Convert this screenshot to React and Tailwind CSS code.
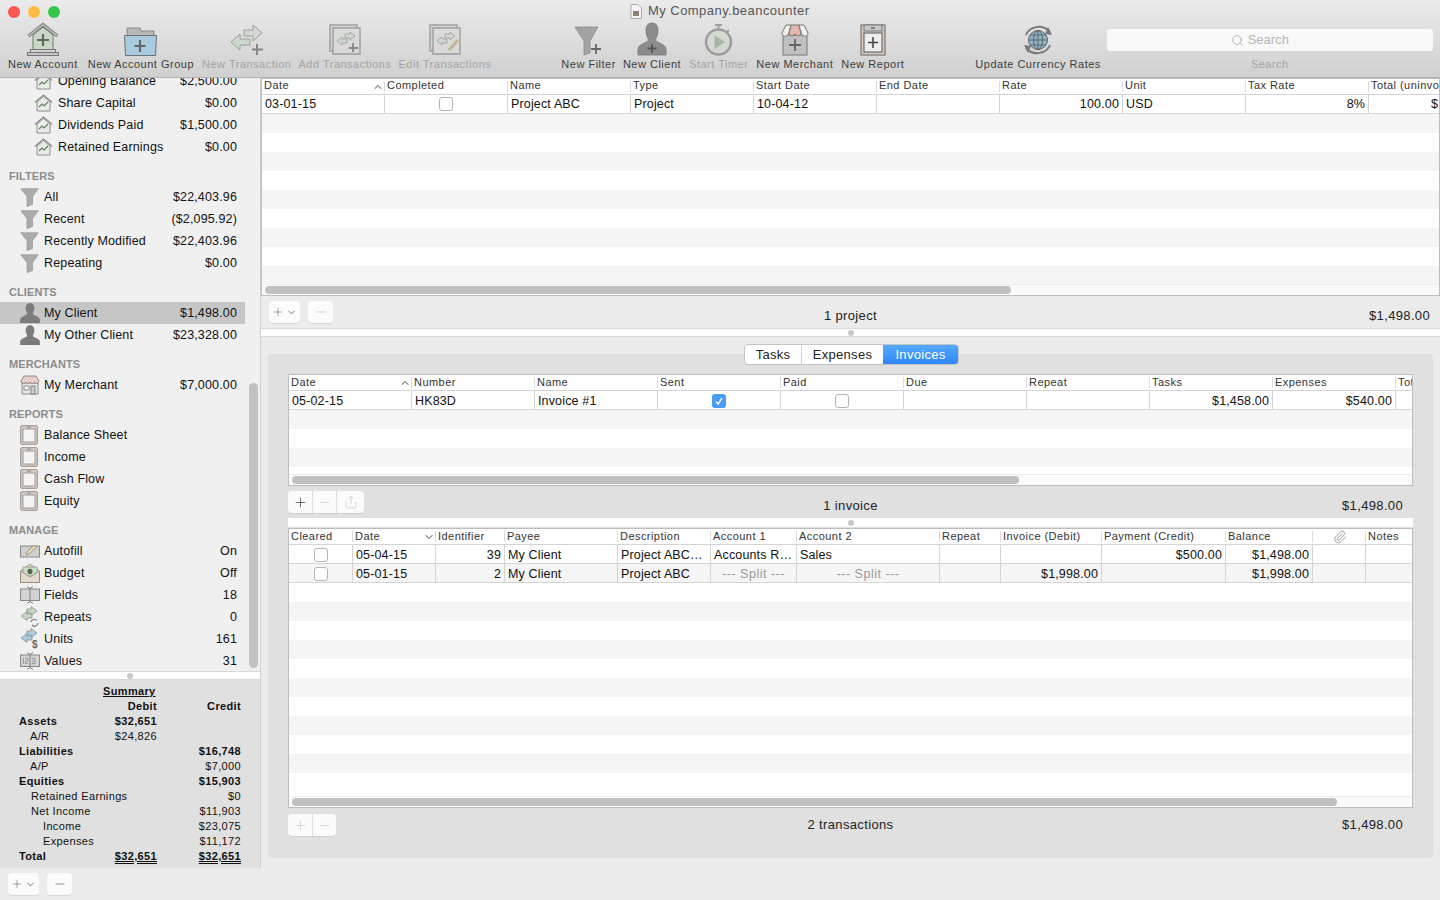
import { ChevronDown, ChevronUp, Minus, Paperclip, Plus, Search, Share } from "lucide-react";

const FONT = "font-['Liberation_Sans',Arial,sans-serif]";

// toolbar icons
function HouseIcon() {
  return (
    <svg width="32" height="33" viewBox="0 0 32 33">
      <path d="M6 12 L16 4 L26 12 V27 H6 Z" fill="#c7d8c4" stroke="#777" strokeWidth="1" />
      <path d="M1.500 13 L16 1.800 L30.500 13" fill="none" stroke="#777" strokeWidth="3.400" />
      <path d="M1.500 13 L16 1.800 L30.500 13" fill="none" stroke="#b9b9b9" strokeWidth="1.600" />
      <rect x="3.500" y="26.500" width="25" height="3" fill="#cfcfcf" stroke="#777" />
      <rect x="0.500" y="29.500" width="31" height="3" fill="#c4c4c4" stroke="#777" />
      <path d="M16 11 V23 M10 17 H22" stroke="#666" strokeWidth="2.200" />
    </svg>
  );
}

function FolderIcon() {
  return (
    <svg width="33" height="29" viewBox="0 0 33 29">
      <path d="M3 12 V1 H16 L17 4 H30 V12 Z" fill="#b8b8b8" stroke="#888" strokeWidth="1" />
      <path d="M0.500 8.500 H32.500 L31.500 28.500 H1.500 Z" fill="#a8cbe0" stroke="#6f6f6f" strokeWidth="1" />
      <path d="M16 13 V25 M10.500 19 H21.500" stroke="#666" strokeWidth="2.200" />
    </svg>
  );
}

function ArrowsIcon() {
  return (
    <svg width="34" height="32" viewBox="0 0 34 32" opacity="0.62">
      <path d="M14 6 H23 V1 L32 9 L23 17 V12 H14 Z" fill="#c6d8c4" stroke="#777" strokeWidth="1" />
      <path d="M20 15 H10 V10 L1 18 L10 26 V21 H20 Z" fill="#c6d8c4" stroke="#777" strokeWidth="1" />
      <path d="M27 20 V31 M22 25.500 H33" stroke="#555" strokeWidth="2" />
    </svg>
  );
}

function DocsIcon({ pencil }) {
  return (
    <svg width="32" height="32" viewBox="0 0 32 32" opacity="0.62">
      <path d="M1 1 H28 V27 H1 Z" fill="#cfcfcf" stroke="#777" strokeWidth="1.400" />
      <path d="M4 4 H31 V30 H4 Z" fill="#d8d8d8" stroke="#777" strokeWidth="1.400" />
      <path d="M16 10 H21 V8 L26 12 L21 16 V14 H16 Z" fill="#c6d8c4" stroke="#777" strokeWidth="0.800" />
      <path d="M18 15 H13 V13 L8 17 L13 21 V19 H18 Z" fill="#c6d8c4" stroke="#777" strokeWidth="0.800" />
      {pencil ? (
        <path d="M20 26 L29 16" stroke="#b59b62" strokeWidth="3" />
      ) : (
        <path d="M24 19 V28 M20 24 H29" stroke="#555" strokeWidth="1.800" />
      )}
    </svg>
  );
}

function FunnelIcon() {
  return (
    <svg width="30" height="30" viewBox="0 0 30 30">
      <path d="M1 1 H24 L16 15 V27 L10 29 V15 Z" fill="#a3a3a3" stroke="#8c8c8c" strokeWidth="0.800" />
      <path d="M22 18 V28 M17 23 H27" stroke="#666" strokeWidth="1.800" />
    </svg>
  );
}

function PersonIcon() {
  return (
    <svg width="30" height="34" viewBox="0 0 30 34">
      <path d="M15 1 C20 1 21 5 21 9 C21 13 19 16 18.500 18 C19 21 29 22 29 27 V33 H1 V27 C1 22 11 21 11.500 18 C11 16 9 13 9 9 C9 5 10 1 15 1 Z" fill="#8c8c8c" stroke="#777" strokeWidth="0.800" />
      <path d="M15 22 V31 M10.500 26.500 H19.500" stroke="#555" strokeWidth="1.800" />
    </svg>
  );
}

function TimerIcon() {
  return (
    <svg width="30" height="32" viewBox="0 0 30 32" opacity="0.62">
      <path d="M11 1 H18 M14.500 1 V6 M25 6 L22 9" stroke="#777" strokeWidth="2" />
      <circle cx="14.500" cy="18" r="12.500" fill="#cfd9cb" stroke="#777" strokeWidth="2.500" />
      <path d="M10.500 11 L21 18 L10.500 25 Z" fill="#8b9b88" />
    </svg>
  );
}

function ShopIcon() {
  return (
    <svg width="28" height="32" viewBox="0 0 28 32">
      <rect x="2" y="11" width="24" height="20" fill="#c0c0c0" stroke="#777" />
      <path d="M10 1 L8 10 C9 12 12 12 14 10 C16 12 19 12 20 10 L18 1 Z" fill="#e3b9ae" stroke="#777" />
      <path d="M5 1 L1 9 C1 13 6 13 7.500 10 L10 1 Z M23 1 L27 9 C27 13 22 13 20.500 10 L18 1 Z" fill="#f0f0f0" stroke="#777" />
      <path d="M14 15 V27 M8 21 H20" stroke="#666" strokeWidth="1.800" />
    </svg>
  );
}

function ClipboardIcon() {
  return (
    <svg width="26" height="32" viewBox="0 0 26 32">
      <rect x="1" y="1" width="24" height="30" fill="#d9c9bd" stroke="#777" strokeWidth="1.200" />
      <rect x="4" y="1" width="18" height="6" fill="#c8c8c8" stroke="#777" />
      <rect x="4" y="9" width="18" height="19" fill="#ededed" stroke="#555" />
      <path d="M13 13 V24 M8 18.500 H18" stroke="#444" strokeWidth="1.600" />
      <path d="M11 4 H15" stroke="#555" strokeWidth="1.200" />
    </svg>
  );
}

function GlobeIcon() {
  return (
    <svg width="32" height="32" viewBox="0 0 32 32">
      <path d="M4 11 C7 3 20 -1 28 8" fill="none" stroke="#777" strokeWidth="2" />
      <path d="M28 21 C25 29 12 33 4 24" fill="none" stroke="#777" strokeWidth="2" />
      <path d="M26 3 L30 11 L23 10 Z M6 29 L2 21 L9 22 Z" fill="#777" />
      <circle cx="16" cy="16" r="9.500" fill="#8fb3c8" stroke="#666" />
      <path d="M6.500 16 H25.500 M8 11 H24 M8 21 H24 M16 6.500 V25.500" stroke="#555" strokeWidth="0.800" fill="none" />
      <ellipse cx="16" cy="16" rx="4.500" ry="9.500" fill="none" stroke="#555" strokeWidth="0.800" />
    </svg>
  );
}

// small sidebar icons
function SmallHouse() {
  return (
    <svg width="19" height="18" viewBox="0 0 19 18">
      <path d="M3 8 L9.500 2.500 L16 8 V17 H3 Z" fill="#e8ece6" stroke="#777" strokeWidth="0.800" />
      <path d="M0.800 8.500 L9.500 1 L18.200 8.500" fill="none" stroke="#8a8a8a" strokeWidth="1.200" />
      <path d="M5 13 L8 10 L10 12 L14 8" fill="none" stroke="#5f7f5d" strokeWidth="1.100" />
    </svg>
  );
}

function SmallFunnel() {
  return (
    <svg width="19" height="19" viewBox="0 0 19 19">
      <path d="M0.800 0.800 H18.200 L12.500 8.500 V16.500 L7 18.500 V8.500 Z" fill="#ababab" stroke="#9a9a9a" strokeWidth="0.800" />
    </svg>
  );
}

function SmallPerson() {
  return (
    <svg width="20" height="20" viewBox="0 0 20 20">
      <path d="M10 0.500 C13 0.500 14 3 14 5.500 C14 8 12.500 9.500 12.500 11 C13 13 19.500 13.500 19.500 16.500 V20 H0.500 V16.500 C0.500 13.500 7 13 7.500 11 C7.500 9.500 6 8 6 5.500 C6 3 7 0.500 10 0.500 Z" fill="#7c7c7c" stroke="#6f6f6f" strokeWidth="0.600" />
    </svg>
  );
}

function SmallShop() {
  return (
    <svg width="20" height="20" viewBox="0 0 20 20">
      <rect x="2" y="8" width="16" height="11" fill="#e6e6e6" stroke="#777" strokeWidth="0.800" />
      <path d="M4 1 H16 L19 6 C19 9 15 9 14.500 7 C14 9 11 9 10 7 C9 9 6 9 5.500 7 C5 9 1 9 1 6 Z" fill="#e8d0ca" stroke="#777" strokeWidth="0.800" />
      <rect x="4" y="11" width="5" height="4" fill="#fff" stroke="#777" strokeWidth="0.800" />
      <rect x="11" y="11" width="4" height="8" fill="#ccc" stroke="#777" strokeWidth="0.800" />
    </svg>
  );
}

function SmallClip() {
  return (
    <svg width="18" height="20" viewBox="0 0 18 20">
      <rect x="0.700" y="0.700" width="16.600" height="18.600" rx="1" fill="#d9d0c9" stroke="#8f867d" strokeWidth="0.900" />
      <rect x="3" y="4" width="12" height="13" fill="#f3f3f3" stroke="#888" strokeWidth="0.800" />
      <path d="M7 2.200 H11" stroke="#777" strokeWidth="0.800" />
    </svg>
  );
}

function SmallPencilBox() {
  return (
    <svg width="20" height="14" viewBox="0 0 20 14">
      <rect x="0.500" y="2" width="19" height="11" fill="#cfcfcf" stroke="#888" />
      <path d="M6 11 L7 8 L14 1 L16.500 3 L9 10 Z" fill="#e9dcb4" stroke="#8a7d55" strokeWidth="0.700" />
    </svg>
  );
}

function SmallEnvelope() {
  return (
    <svg width="20" height="20" viewBox="0 0 20 20">
      <path d="M0.500 8 L10 1 L19.500 8 V19.500 H0.500 Z" fill="#e4d8cc" stroke="#8a8178" strokeWidth="0.800" />
      <rect x="3" y="4" width="14" height="9" fill="#c8dcc6" stroke="#7d8f7b" strokeWidth="0.600" />
      <ellipse cx="10" cy="8.500" rx="2.500" ry="2.800" fill="#4b6b49" />
      <path d="M0.500 8 L10 14 L19.500 8 V19.500 H0.500 Z" fill="#e4d8cc" stroke="#8a8178" strokeWidth="0.800" />
    </svg>
  );
}

function SmallFields({ digits }) {
  return (
    <svg width="20" height="18" viewBox="0 0 20 18">
      <rect x="0.500" y="3" width="19" height="11.500" fill="#d3d3d3" stroke="#888" />
      <path d="M10 2 V16 M7 0.500 L10 2.500 L13 0.500 M7 17.500 L10 15.500 L13 17.500" fill="none" stroke="#777" strokeWidth="0.900" />
      {digits && <path d="M3.500 6 V12 M5.500 6.500 H8 V9 H5.500 V11.500 H8 M12 6.500 H15 V11.500 H12 M12 9 H15" fill="none" stroke="#888" strokeWidth="0.800" />}
    </svg>
  );
}

function SmallArrows({ tone, dollar }) {
  return (
    <svg width="20" height="22" viewBox="0 0 20 22">
      <path d="M7 3 H11 V0.500 L17 5 L11 9.500 V7 H7 Z" fill={tone} stroke="#888" strokeWidth="0.700" />
      <path d="M12 8 H7 V5.500 L1 10 L7 14.500 V12 H12 Z" fill={tone} stroke="#888" strokeWidth="0.700" />
      {dollar ? (
        <text x="12" y="20" fontSize="10" fontWeight="700" fill="#666">$</text>
      ) : (
        <path d="M11 16 A3.500 3.500 0 0 1 17 14.500 M18 17 A3.500 3.500 0 0 1 12 19" fill="none" stroke="#777" strokeWidth="1.100" />
      )}
    </svg>
  );
}

function ToolItem({ label, icon, dim, className = "" }) {
  return (
    <div className={`flex flex-col items-center ${className}`}>
      <div className="flex h-[38px] items-end justify-center">{icon}</div>
      <span className={`mt-[1px] whitespace-nowrap text-[11px] leading-[14px] tracking-[0.5px] ${dim ? "text-[#a3a3a3]" : "text-[#3c3c3c]"}`}>{label}</span>
    </div>
  );
}

function Toolbar() {
  return (
    <div className="relative h-[78px] shrink-0 rounded-t-[5px] border-b border-[#b1b1b1] bg-gradient-to-b from-[#ebebeb] to-[#d0d0d0]">
      <div className="flex h-[23px] items-center pl-[8px]">
        <span className="h-[12px] w-[12px] rounded-full bg-[#fc5753]" />
        <span className="ml-[8px] h-[12px] w-[12px] rounded-full bg-[#fdbc40]" />
        <span className="ml-[8px] h-[12px] w-[12px] rounded-full bg-[#33c748]" />
      </div>
      <div className="absolute left-[630px] top-[3px] flex items-center gap-[6px] text-[13px] leading-[16px] tracking-[0.45px] text-[#555]">
        <svg width="12" height="15" viewBox="0 0 12 15">
          <path d="M1 0.500 H8 L11.500 4 V14.500 H1 Z" fill="#f5f5f5" stroke="#aaa" />
          <rect x="3" y="7" width="6" height="5" fill="#8a7f74" />
        </svg>
        <span>My Company.beancounter</span>
      </div>
      <div className="absolute left-0 right-0 top-[18px] flex">
        <ToolItem label="New Account" icon={<HouseIcon />} className="ml-[8px]" />
        <ToolItem label="New Account Group" icon={<FolderIcon />} className="ml-[10px]" />
        <ToolItem label="New Transaction" icon={<ArrowsIcon />} dim className="ml-[8px]" />
        <ToolItem label="Add Transactions" icon={<DocsIcon />} dim className="ml-[7px]" />
        <ToolItem label="Edit Transactions" icon={<DocsIcon pencil />} dim className="ml-[7px]" />
        <ToolItem label="New Filter" icon={<FunnelIcon />} className="ml-[70px]" />
        <ToolItem label="New Client" icon={<PersonIcon />} className="ml-[7px]" />
        <ToolItem label="Start Timer" icon={<TimerIcon />} dim className="ml-[8px]" />
        <ToolItem label="New Merchant" icon={<ShopIcon />} className="ml-[8px]" />
        <ToolItem label="New Report" icon={<ClipboardIcon />} className="ml-[8px]" />
        <ToolItem label="Update Currency Rates" icon={<GlobeIcon />} className="ml-[71px]" />
        <div className="ml-[6px] flex w-[326px] flex-col items-center">
          <div className="mt-[11px] flex h-[22px] w-full items-center justify-center gap-[4px] rounded-[3px] bg-[#f9f9f9] pr-[20px] text-[13px] text-[#b5b5b5]">
            <Search size={13} strokeWidth={1.300} className="text-[#999]" />
            <span>Search</span>
          </div>
          <span className="mt-[6px] text-[11px] leading-[14px] tracking-[0.5px] text-[#a3a3a3]">Search</span>
        </div>
      </div>
    </div>
  );
}

function SideHead({ children }) {
  return (
    <div className="flex h-[28px] items-end pb-[3px] pl-[9px] text-[11px] font-bold leading-[14px] tracking-[0.1px] text-[#8c8c8c]">
      {children}
    </div>
  );
}

function SideRow({ icon, label, value, selected, left = "pl-[20px]" }) {
  return (
    <div className={`flex h-[22px] items-center ${left} pr-[8px] text-[12.500px] tracking-[0.15px] text-[#111] ${selected ? "bg-[#c6c6c6]" : ""}`}>
      <span className="flex w-[24px] shrink-0 items-center">{icon}</span>
      <span className="flex-1 truncate">{label}</span>
      <span>{value}</span>
    </div>
  );
}

function Sidebar() {
  return (
    <div className="flex w-full flex-col border-r border-[#cfcfcf] bg-[#f0f0f0]">
      <div className="relative h-[593px] shrink-0 overflow-hidden">
        <div className="-mt-[8px] w-[245px]">
          <SideRow icon={<SmallHouse />} label="Opening Balance" value="$2,500.00" left="pl-[34px]" />
          <SideRow icon={<SmallHouse />} label="Share Capital" value="$0.00" left="pl-[34px]" />
          <SideRow icon={<SmallHouse />} label="Dividends Paid" value="$1,500.00" left="pl-[34px]" />
          <SideRow icon={<SmallHouse />} label="Retained Earnings" value="$0.00" left="pl-[34px]" />
          <SideHead>FILTERS</SideHead>
          <SideRow icon={<SmallFunnel />} label="All" value="$22,403.96" />
          <SideRow icon={<SmallFunnel />} label="Recent" value="($2,095.92)" />
          <SideRow icon={<SmallFunnel />} label="Recently Modified" value="$22,403.96" />
          <SideRow icon={<SmallFunnel />} label="Repeating" value="$0.00" />
          <SideHead>CLIENTS</SideHead>
          <SideRow icon={<SmallPerson />} label="My Client" value="$1,498.00" selected />
          <SideRow icon={<SmallPerson />} label="My Other Client" value="$23,328.00" />
          <SideHead>MERCHANTS</SideHead>
          <SideRow icon={<SmallShop />} label="My Merchant" value="$7,000.00" />
          <SideHead>REPORTS</SideHead>
          <SideRow icon={<SmallClip />} label="Balance Sheet" />
          <SideRow icon={<SmallClip />} label="Income" />
          <SideRow icon={<SmallClip />} label="Cash Flow" />
          <SideRow icon={<SmallClip />} label="Equity" />
          <SideHead>MANAGE</SideHead>
          <SideRow icon={<SmallPencilBox />} label="Autofill" value="On" />
          <SideRow icon={<SmallEnvelope />} label="Budget" value="Off" />
          <SideRow icon={<SmallFields />} label="Fields" value="18" />
          <SideRow icon={<SmallArrows tone="#c6d8c4" />} label="Repeats" value="0" />
          <SideRow icon={<SmallArrows tone="#a8cbdf" dollar />} label="Units" value="161" />
          <SideRow icon={<SmallFields digits />} label="Values" value="31" />
        </div>
        <div className="absolute left-[249px] top-[305px] h-[285px] w-[9px] rounded-full bg-[#c1c1c1]" />
      </div>
      <div className="flex h-[9px] shrink-0 items-center justify-center border-y border-[#d8d8d8] bg-white">
        <span className="h-[6px] w-[6px] rounded-full bg-[#c8c8c8]" />
      </div>
      <Summary />
    </div>
  );
}

const summaryRows = [
  { label: "Assets", debit: "$32,651", bold: true, pad: "pl-[19px]" },
  { label: "A/R", debit: "$24,826", pad: "pl-[30px]" },
  { label: "Liabilities", credit: "$16,748", bold: true, pad: "pl-[19px]" },
  { label: "A/P", credit: "$7,000", pad: "pl-[30px]" },
  { label: "Equities", credit: "$15,903", bold: true, pad: "pl-[19px]" },
  { label: "Retained Earnings", credit: "$0", pad: "pl-[31px]" },
  { label: "Net Income", credit: "$11,903", pad: "pl-[31px]" },
  { label: "Income", credit: "$23,075", pad: "pl-[43px]" },
  { label: "Expenses", credit: "$11,172", pad: "pl-[43px]" },
];

function Summary() {
  return (
    <div className="h-[188px] shrink-0 bg-[#e0e0e0] pt-[4px] text-[11px] leading-[15px] tracking-[0.35px] text-[#111]">
      <div className="pl-[103px] font-bold underline">Summary</div>
      <div className="grid grid-cols-[157px_84px] font-bold">
        <span className="text-right">Debit</span>
        <span className="text-right">Credit</span>
      </div>
      {summaryRows.map((r) => (
        <div key={r.label} className={`relative grid h-[15px] grid-cols-[157px_84px] ${r.bold ? "font-bold" : ""}`}>
          <span className="text-right">{r.debit}</span>
          <span className="text-right">{r.credit}</span>
          <span className={`absolute left-0 top-0 whitespace-nowrap ${r.pad}`}>{r.label}</span>
        </div>
      ))}
      <div className="relative grid grid-cols-[157px_84px] font-bold">
        <span className="text-right underline decoration-double">$32,651</span>
        <span className="text-right underline decoration-double">$32,651</span>
        <span className="absolute left-0 top-0 pl-[19px]">Total</span>
      </div>
    </div>
  );
}

function Check({ on }) {
  if (on) {
    return (
      <span className="flex h-[14px] w-[14px] items-center justify-center rounded-[3px] bg-[#4a9cf6]">
        <svg width="10" height="10" viewBox="0 0 10 10">
          <path d="M2 5.500 L4.200 8 L8 2" fill="none" stroke="#fff" strokeWidth="1.400" />
        </svg>
      </span>
    );
  }
  return <span className="h-[14px] w-[14px] rounded-[3px] border border-[#b4b4b4] bg-white" />;
}

// cols: [{ title, width, sort }], rows: arrays of cells
function DataTable({ cols, rows, stripes, height, thumb, stripeFirst, top }) {
  return (
    <div className="relative overflow-hidden border border-[#bdbdbd] bg-white" style={{ height }}>
      <div className={`flex h-[16px] border-b border-[#d4d4d4] bg-white ${top ? "pb-[2px]" : ""}`}>
        {cols.map((c) => (
          <div
            key={c.title}
            className="relative flex shrink-0 items-center whitespace-nowrap pl-[2px] text-[11px] tracking-[0.45px] text-[#333]"
            style={{ width: c.width }}
          >
            {c.title === "clip" ? (
              <Paperclip size={14} strokeWidth={1.200} className="ml-[18px] text-[#777]" />
            ) : (
              <span className="overflow-hidden">{c.title}</span>
            )}
            {c.sort === "up" && <ChevronUp size={12} strokeWidth={2} className="absolute right-[1px] top-[2px] text-[#444]" />}
            {c.sort === "down" && <ChevronDown size={12} strokeWidth={2} className="absolute right-[1px] top-[2px] text-[#444]" />}
            <span className="absolute right-0 top-[2px] h-[11px] w-px bg-[#dcdcdc]" />
          </div>
        ))}
      </div>
      {rows.map((row, i) => (
        <div key={i} className={`flex h-[19px] border-b border-[#d4d4d4] ${i % 2 ? "bg-[#f5f5f5]" : "bg-white"}`}>
          {cols.map((c, j) => {
            const cell = row[j];
            return (
              <div
                key={j}
                className={`flex shrink-0 items-center overflow-hidden whitespace-nowrap border-r border-[#d4d4d4] px-[3px] text-[12.500px] tracking-[0.15px] text-[#111] ${top ? "" : "pt-[2px]"} ${c.right ? "justify-end" : ""} ${c.center ? "justify-center" : ""}`}
                style={{ width: c.width }}
              >
                {cell && cell.check !== undefined ? (
                  <Check on={cell.check} />
                ) : cell && cell.dim ? (
                  <span className="w-full text-center tracking-[0.5px] text-[#999]">{cell.dim}</span>
                ) : (
                  cell
                )}
              </div>
            );
          })}
        </div>
      ))}
      {Array.from({ length: stripes }).map((_, i) => (
        <div key={i} className={`h-[19px] ${(i % 2 === 0) === !stripeFirst ? "bg-[#f5f5f5]" : "bg-white"}`} />
      ))}
      <div className="absolute bottom-0 left-0 right-0 flex h-[11px] items-center border-t border-[#ececec] bg-[#fafafa] px-[3px]">
        <div className="h-[8px] rounded-full bg-[#c1c1c1]" style={{ width: thumb }} />
      </div>
    </div>
  );
}

const projectCols = [
  { title: "Date", width: 123, sort: "up" },
  { title: "Completed", width: 123, center: true },
  { title: "Name", width: 123 },
  { title: "Type", width: 123 },
  { title: "Start Date", width: 123 },
  { title: "End Date", width: 123 },
  { title: "Rate", width: 123, right: true },
  { title: "Unit", width: 123 },
  { title: "Tax Rate", width: 123, right: true },
  { title: "Total (uninvoiced)", width: 123, right: true },
];

const invoiceCols = [
  { title: "Date", width: 123, sort: "up" },
  { title: "Number", width: 123 },
  { title: "Name", width: 123 },
  { title: "Sent", width: 123, center: true },
  { title: "Paid", width: 123, center: true },
  { title: "Due", width: 123 },
  { title: "Repeat", width: 123 },
  { title: "Tasks", width: 123, right: true },
  { title: "Expenses", width: 123, right: true },
  { title: "Total", width: 123 },
];

const txCols = [
  { title: "Cleared", width: 64, center: true },
  { title: "Date", width: 83, sort: "down" },
  { title: "Identifier", width: 69, right: true },
  { title: "Payee", width: 113 },
  { title: "Description", width: 93 },
  { title: "Account 1", width: 86 },
  { title: "Account 2", width: 143 },
  { title: "Repeat", width: 61 },
  { title: "Invoice (Debit)", width: 101, right: true },
  { title: "Payment (Credit)", width: 124, right: true },
  { title: "Balance", width: 87, right: true },
  { title: "clip", width: 53 },
  { title: "Notes", width: 47 },
];

function SegButton({ parts }) {
  return (
    <div className="flex h-[22px] overflow-hidden rounded-[4px] bg-[#fbfbfb] shadow-[0_1px_0_#d0d0d0]">
      {parts.map((p, i) => (
        <div key={i} className={`flex items-center justify-center ${i === 2 ? "w-[28px]" : "w-[24px]"} ${i ? "border-l border-[#dedede]" : ""}`}>
          {p}
        </div>
      ))}
    </div>
  );
}

function AddMenuButton() {
  return (
    <div className="flex h-[22px] w-[31px] items-center justify-center gap-[2px] rounded-[4px] bg-[#fbfbfb] text-[#666] shadow-[0_1px_0_#d8d8d8]">
      <Plus size={12} strokeWidth={1.200} />
      <ChevronDown size={11} strokeWidth={2} />
    </div>
  );
}

function MinusButton({ dim }) {
  return (
    <div className="flex h-[22px] w-[25px] items-center justify-center rounded-[4px] bg-[#fbfbfb] shadow-[0_1px_0_#d8d8d8]">
      <Minus size={14} strokeWidth={1.200} className={dim ? "text-[#bbb]" : "text-[#666]"} />
    </div>
  );
}

function Divider({ className = "" }) {
  return (
    <div className={`flex shrink-0 items-center justify-center bg-white ${className}`}>
      <span className="h-[6px] w-[6px] rounded-full bg-[#c8c8c8]" />
    </div>
  );
}

function Footer({ left, center, value, className = "", leftClass = "" }) {
  return (
    <div className={`grid grid-cols-[1fr_auto_1fr] items-center text-[13px] tracking-[0.35px] text-[#222] ${className}`}>
      <div className={`flex items-center gap-[8px] ${leftClass}`}>{left}</div>
      <span className="pt-[var(--nudge)]">{center}</span>
      <span className="pr-[10px] pt-[var(--nudge)] text-right">{value}</span>
    </div>
  );
}

function Main() {
  return (
    <div className="flex min-w-0 flex-1 flex-col">
      <div className="h-[218px] shrink-0">
        <DataTable
          cols={projectCols}
          rows={[["03-01-15", { check: false }, "Project ABC", "Project", "10-04-12", "", "100.00", "USD", "8%", "$1,498.00"]]}
          stripes={9}
          stripeFirst={false}
          height={218}
          thumb={746}
          top
        />
      </div>
      <Footer
        className="h-[32px] shrink-0 [--nudge:8px]"
        leftClass="pl-[8px]"
        left={
          <>
            <AddMenuButton />
            <MinusButton dim />
          </>
        }
        center="1 project"
        value="$1,498.00"
      />
      <Divider className="h-[9px] border-y border-[#d8d8d8]" />
      <div className="relative flex-1 px-[7px] pt-[17px]">
        <div className="absolute left-[483px] top-[7px] z-10 flex h-[21px] overflow-hidden rounded-[4px] border border-[#c4c4c4] bg-white text-[13px] tracking-[0.3px] text-[#222]">
          <div className="flex w-[57px] items-center justify-center border-r border-[#d4d4d4]">Tasks</div>
          <div className="flex w-[81px] items-center justify-center">Expenses</div>
          <div className="flex w-[75px] items-center justify-center bg-gradient-to-b from-[#54a9fb] to-[#2f86f7] text-white">Invoices</div>
        </div>
        <div className="h-[504px] w-[1165px] rounded-[4px] bg-[#e0e0e0] px-[20px] pt-[20px]">
          <DataTable
            cols={invoiceCols}
            rows={[["05-02-15", "HK83D", "Invoice #1", { check: true }, { check: false }, "", "", "$1,458.00", "$540.00", ""]]}
            stripes={4}
            stripeFirst={false}
            height={112}
            thumb={727}
          />
          <Footer
            className="h-[32px] [--nudge:7px]"
            left={
              <SegButton
                parts={[
                  <Plus key="a" size={15} strokeWidth={1.200} className="text-[#444]" />,
                  <Minus key="b" size={15} strokeWidth={1.200} className="text-[#ccc]" />,
                  <Share key="c" size={14} strokeWidth={1.200} className="text-[#ccc]" />,
                ]}
              />
            }
            center="1 invoice"
            value="$1,498.00"
          />
          <Divider className="h-[9px]" />
          <div className="mt-[1px]">
            <DataTable
              cols={txCols}
              rows={[
                [{ check: false }, "05-04-15", "39", "My Client", "Project ABC…", "Accounts R…", "Sales", "", "", "$500.00", "$1,498.00", "", ""],
                [{ check: false }, "05-01-15", "2", "My Client", "Project ABC", { dim: "--- Split ---" }, { dim: "--- Split ---" }, "", "$1,998.00", "", "$1,998.00", "", ""],
              ]}
              stripes={11}
              stripeFirst
              height={280}
              thumb={1045}
            />
          </div>
          <Footer
            className="h-[34px] [--nudge:0px]"
            left={
              <SegButton
                parts={[
                  <Plus key="a" size={15} strokeWidth={1.200} className="text-[#ccc]" />,
                  <Minus key="b" size={15} strokeWidth={1.200} className="text-[#ccc]" />,
                ]}
              />
            }
            center="2 transactions"
            value="$1,498.00"
          />
        </div>
      </div>
    </div>
  );
}

export default function App() {
  return (
    <div className={`${FONT} flex h-[900px] w-[1440px] flex-col overflow-hidden bg-[#ebebeb]`}>
      <Toolbar />
      <div className="flex min-h-0 flex-1">
        <div className="flex w-[261px] shrink-0 flex-col">
          <Sidebar />
          <div className="flex h-[32px] shrink-0 items-center gap-[8px] pl-[8px]">
            <AddMenuButton />
            <MinusButton />
          </div>
        </div>
        <Main />
      </div>
    </div>
  );
}
